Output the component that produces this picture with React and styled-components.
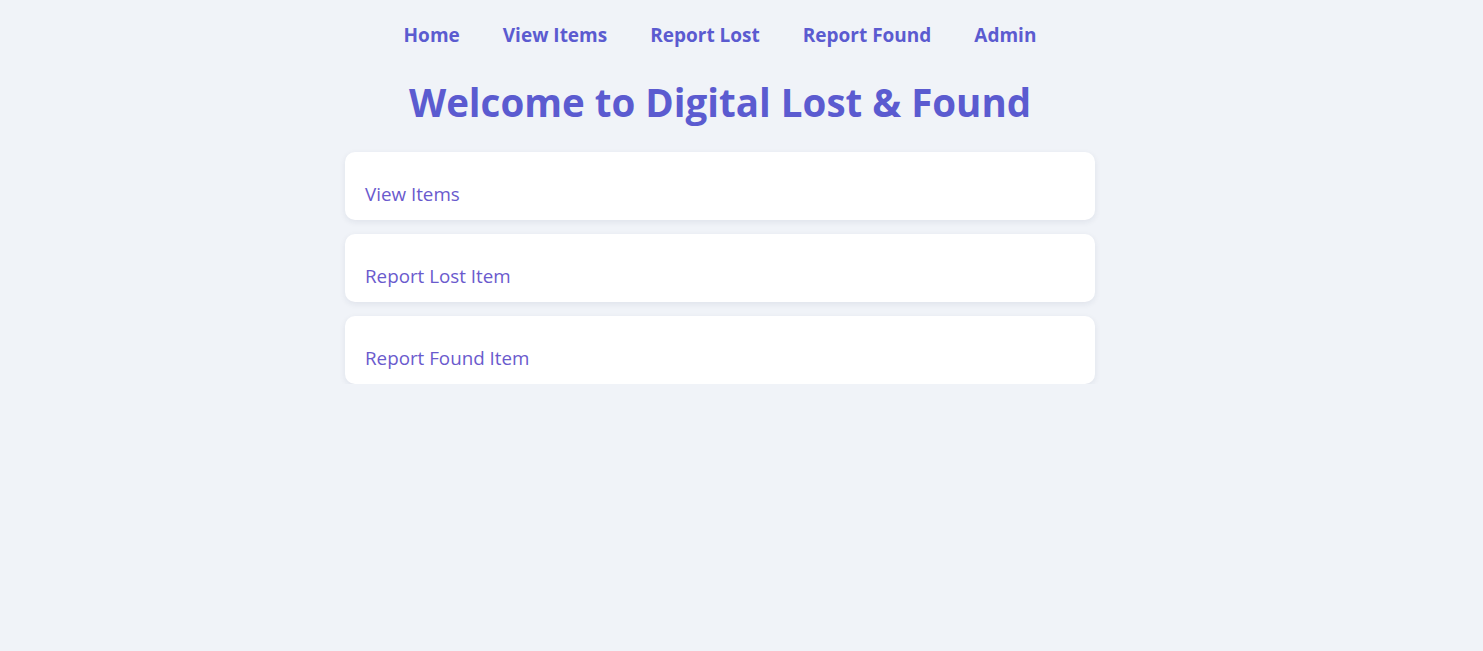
import styled, { createGlobalStyle } from "styled-components";

const GlobalStyle = createGlobalStyle`
body{
    margin:0;
    background-color:#f0f3f8;
    font-family:"Open Sans","Noto Sans",sans-serif;
}
`

const Page = styled.div`
width:1440px;
display:flex;
flex-direction:column;
align-items:center;
`

const Nav = styled.nav`
display:flex;
gap:43px;
padding-top:22px;
`

const NavLink = styled.a`
color:#5b5bd0;
font-weight:700;
font-size:19px;
line-height:26px;
text-decoration:none;
cursor:pointer;
`

const Title = styled.h1`
margin:28px 0 24px;
color:#5b5bd0;
font-size:38.5px;
line-height:52px;
font-weight:700;
`

const CardList = styled.div`
width:750px;
display:flex;
flex-direction:column;
gap:14px;
`

const Card = styled.a`
display:block;
height:68px;
box-sizing:border-box;
padding:30px 20px 0;
background-color:white;
border-radius:10px;
box-shadow:0 2px 6px rgba(30,40,80,0.08);
color:#6a5acd;
font-size:18.8px;
line-height:24px;
text-decoration:none;
cursor:pointer;
`

const NAV_LINKS = ["Home","View Items","Report Lost","Report Found","Admin"];
const CARDS = ["View Items","Report Lost Item","Report Found Item"];

export default function App(){
    return(
        <>
            <GlobalStyle />
            <Page>
                <Nav>
                    {NAV_LINKS.map((link)=>(
                        <NavLink key={link}>{link}</NavLink>
                    ))}
                </Nav>
                <Title>Welcome to Digital Lost &amp; Found</Title>
                <CardList>
                    {CARDS.map((card)=>(
                        <Card key={card}>{card}</Card>
                    ))}
                </CardList>
            </Page>
        </>
    )
}
